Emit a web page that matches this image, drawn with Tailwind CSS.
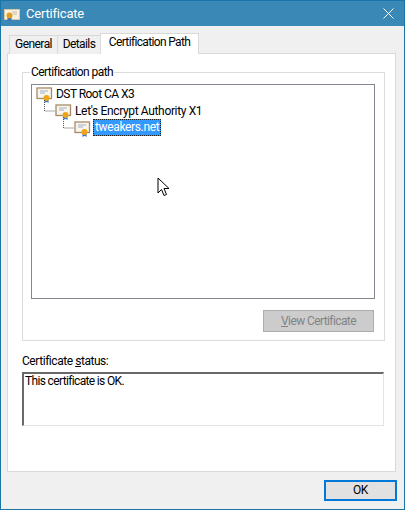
<!DOCTYPE html>
<html lang="en">
<head>
    <meta charset="UTF-8">
    <title>Certificate</title>
    <script src="https://cdn.jsdelivr.net/npm/@tailwindcss/browser@4"></script>
</head>
<body class="bg-white">
    <div class="relative w-[405px] h-[510px] overflow-hidden flex flex-col bg-[#f0f0f0] border border-[#1a74a8] text-[12px] leading-[16px] tracking-[-0.35px] text-black font-['Roboto',sans-serif]">

        <!-- title bar -->
        <div class="h-[25px] shrink-0 flex items-center bg-[#3a88b5] text-white">
            <svg class="ml-[3px] w-[16px] h-[15px]" viewBox="0 0 16 15">
                <rect x="0.5" y="3.500" width="15" height="10" fill="#f8f1e0" stroke="#d8c6a8"/>
                <path d="M8 6h5M9 8h4" stroke="#cdbb9f"/>
                <path d="M3.500 10v5l2-1 2 1v-5" fill="#2f6fd0"/>
                <circle cx="5.500" cy="9.500" r="3" fill="#dca01c"/>
            </svg>
            <span class="ml-[6px] text-[13px] tracking-[-0.2px]">Certificate</span>
            <svg class="ml-auto mr-[10px] w-[11px] h-[11px]" viewBox="0 0 11 11">
                <path d="M0.500 0.500l10 10M10.500 0.500l-10 10" stroke="#fff" fill="none"/>
            </svg>
        </div>

        <!-- tabs -->
        <div class="flex items-end h-[28px] shrink-0 pl-[2px] ml-[6px] relative z-10 -mb-px">
            <div class="h-[19px] w-[49px] bg-[#f0f0f0] border border-b-0 border-[#d9d9d9] text-center leading-[17px] tracking-[-0.55px] mr-[-1px]">General</div>
            <div class="h-[19px] w-[44px] bg-[#f0f0f0] border border-b-0 border-[#d9d9d9] text-center leading-[17px] tracking-[-0.6px] mr-[-1px]">Details</div>
            <div class="h-[21px] w-[99px] bg-white border border-b-0 border-[#d9d9d9] text-center leading-[17px] tracking-[-0.65px]">Certification Path</div>
        </div>

        <!-- tab panel -->
        <div class="ml-[6px] w-[389px] h-[419px] shrink-0 bg-white border border-[#d9d9d9] px-[14px] pt-[18px] flex flex-col">
            <div class="relative w-[363px] h-[269px] shrink-0 border border-[#dcdcdc] px-[8px] pt-[11px]">
                <span class="absolute left-[7px] -top-[9px] bg-white px-px tracking-[-0.57px]">Certification path</span>
                <div class="w-[344px] h-[215px] border border-[#828790] bg-white">
                    <div class="h-[17px] pl-[4px] flex items-center">
                        <svg class="w-[16px] h-[16px] overflow-visible" viewBox="0 0 16 16">
                            <rect x="1" y="2" width="14.500" height="10.500" fill="#f8f5ec" stroke="#a58a6a" stroke-width="1.300"/>
                            <path d="M4 5h8M4 7h5" stroke="#9fb0c4"/>
                            <path d="M8.500 13v4l2-1.200 2 1.200v-4" fill="#2f6fd0"/>
                            <circle cx="10.500" cy="12" r="3" fill="#eda51a"/>
                        </svg>
                        <span class="ml-[4px] tracking-[-0.55px]">DST Root CA X3</span>
                    </div>
                    <div class="h-[17px] pl-[4px] flex items-center">
                        <svg class="w-[35px] h-[16px] overflow-visible" viewBox="0 0 35 16">
                            <path d="M8.500 -3v11h10" stroke="#555" fill="none" stroke-dasharray="1 1"/>
                            <rect x="20" y="2" width="14.500" height="10.500" fill="#f8f5ec" stroke="#a58a6a" stroke-width="1.300"/>
                            <path d="M23 5h8M23 7h5" stroke="#9fb0c4"/>
                            <path d="M27.500 13v4l2-1.200 2 1.200v-4" fill="#2f6fd0"/>
                            <circle cx="29.500" cy="12" r="3" fill="#eda51a"/>
                        </svg>
                        <span class="ml-[4px]">Let's Encrypt Authority X1</span>
                    </div>
                    <div class="h-[17px] pl-[23px] flex items-center">
                        <svg class="w-[35px] h-[16px] overflow-visible" viewBox="0 0 35 16">
                            <path d="M8.500 -3v11h10" stroke="#555" fill="none" stroke-dasharray="1 1"/>
                            <rect x="20" y="2" width="14.500" height="10.500" fill="#f8f5ec" stroke="#a58a6a" stroke-width="1.300"/>
                            <path d="M23 5h8M23 7h5" stroke="#9fb0c4"/>
                            <path d="M27.500 13v4l2-1.200 2 1.200v-4" fill="#2f6fd0"/>
                            <circle cx="29.500" cy="12" r="3" fill="#eda51a"/>
                        </svg>
                        <span class="ml-[3px] h-[17px] px-px leading-[15px] bg-[#3399ff] text-white border border-dotted border-[#222]">tweakers.net</span>
                    </div>
                </div>
                <div class="mt-[11px] flex justify-end pr-[2px]">
                    <div class="w-[111px] h-[22px] bg-[#cccccc] border border-[#adadad] text-[#838383] text-center leading-[20px] tracking-[-0.6px]"><u>V</u>iew Certificate</div>
                </div>
            </div>
            <div class="mt-[12px] tracking-[-0.45px]">Certificate <u>s</u>tatus:</div>
            <div class="mt-[3px] h-[54px] w-[362px] bg-white border-t-2 border-l-2 border-t-[#696969] border-l-[#696969] border-r border-b border-r-[#e3e3e3] border-b-[#e3e3e3] pl-px leading-[15px] tracking-[-0.65px]">This certificate is OK.</div>
        </div>

        <!-- footer -->
        <div class="flex justify-end pt-[8px] pr-[7px]">
            <div class="w-[73px] h-[21px] bg-[#e1e1e1] border-2 border-[#0078d7] text-center leading-[17px]">OK</div>
        </div>

        <!-- mouse pointer -->
        <svg class="absolute left-[156px] top-[176px] w-[13px] h-[20px]" viewBox="0 0 13 20">
            <path d="M1 1v15l3.500-3.500 2.500 6 2.500-1-2.500-6h5z" fill="#fff" stroke="#000"/>
        </svg>
    </div>
</body>
</html>
